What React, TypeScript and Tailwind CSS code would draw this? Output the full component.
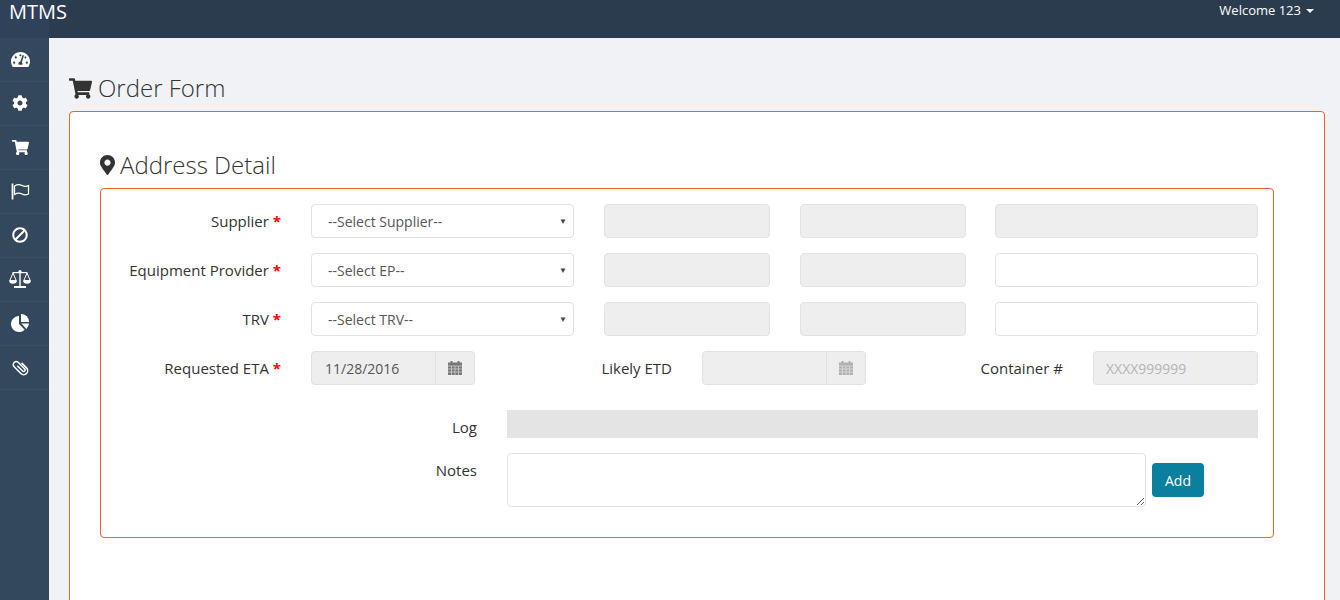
import React from 'react';
import { FaBan, FaCog, FaMapMarkerAlt, FaShoppingCart, FaTachometerAlt } from 'react-icons/fa';

function FlagIcon() {
  return (
    <svg width="19" height="17" viewBox="0 0 19 17" fill="none" stroke="currentColor">
      <path d="M1.5 0.5V16.5" strokeWidth="1.8" />
      <path
        d="M3.5 3C6 1.5 9 1.5 11 2.5C13 3.5 15.5 3.5 17.5 2.5V11C15.5 12 13 12 11 11C9 10 6 10 3.5 11.5Z"
        strokeWidth="1.3"
      />
    </svg>
  );
}

function ScaleIcon() {
  return (
    <svg width="22" height="20" viewBox="0 0 22 20" fill="currentColor">
      <circle cx="11" cy="2.5" r="1.6" />
      <rect x="10.3" y="2" width="1.4" height="15" />
      <rect x="3.5" y="3" width="15" height="1.2" />
      <rect x="5" y="17" width="12" height="2" />
      <path d="M4 4L0.8 11.5H7.2Z" fill="none" stroke="currentColor" strokeWidth="1" />
      <path d="M18 4L14.8 11.5H21.2Z" fill="none" stroke="currentColor" strokeWidth="1" />
      <path d="M0 11.5H8C8 13.5 6.2 14.8 4 14.8C1.8 14.8 0 13.5 0 11.5Z" />
      <path d="M14 11.5H22C22 13.5 20.2 14.8 18 14.8C15.8 14.8 14 13.5 14 11.5Z" />
    </svg>
  );
}

function PieIcon() {
  return (
    <svg width="18" height="18" viewBox="0 0 18 18" fill="currentColor">
      <path d="M8 2A8 8 0 1 0 13.66 15.66L8 10Z" />
      <path d="M10 0A8 8 0 0 1 18 8H10Z" />
      <path d="M10.4 9.6H18A8 8 0 0 1 15.4 15Z" />
    </svg>
  );
}

function ClipIcon() {
  return (
    <svg width="19" height="19" viewBox="-1 -1 19 19" fill="none" stroke="currentColor" strokeWidth="1.5">
      <g transform="rotate(-45 8.5 8.5)">
        <path d="M7.5 5V12.5A1.5 1.5 0 0 0 10.5 12.5V3.5A3 3 0 0 0 4.5 3.5V13A4 4 0 0 0 12.5 13V6" />
      </g>
    </svg>
  );
}

function CalendarIcon({ className }: { className: string }) {
  return (
    <svg width="14" height="14" viewBox="0 0 14 14" className={className} fill="currentColor">
      <rect x="2.5" y="0" width="2" height="3" />
      <rect x="9.5" y="0" width="2" height="3" />
      <rect x="0" y="1.5" width="14" height="12.5" />
      <path d="M0 5H14M0 8H14M0 11H14M3.5 5V14M7 5V14M10.5 5V14" stroke="#eeeeee" strokeWidth="0.8" opacity="0.75" />
    </svg>
  );
}

const navIcons = [
  <FaTachometerAlt size={19} />,
  <FaCog size={16} />,
  <FaShoppingCart size={17} />,
  <FlagIcon />,
  <FaBan size={16} className="-scale-x-100" />,
  <ScaleIcon />,
  <PieIcon />,
  <ClipIcon />,
];

const inputBase = 'h-[34px] rounded-[4px] border border-[#e2e2e2]';
const readOnlyInput = `${inputBase} bg-[#eeeeee]`;
const labelText = 'text-[15px] leading-[20px] text-[#333333] text-right';

function Required({ label }: { label: string }) {
  return (
    <div className={`${labelText} w-[180px] shrink-0`}>
      {label} <span className="font-bold text-[#ff0000]">*</span>
    </div>
  );
}

function SelectBox({ text }: { text: string }) {
  return (
    <div className={`${inputBase} ml-[30px] w-[263px] bg-white flex items-center justify-between pl-4 pr-[6px] text-[14px] text-[#555555]`}>
      <span>{text}</span>
      <span className="text-[8px] text-[#444444]">▼</span>
    </div>
  );
}

function FormRow({ label, text, third }: { label: string; text: string; third: boolean }) {
  return (
    <div className="flex items-center">
      <Required label={label} />
      <SelectBox text={text} />
      <div className={`${readOnlyInput} ml-[30px] w-[166px]`} />
      <div className={`${readOnlyInput} ml-[30px] w-[166px]`} />
      <div className={`${inputBase} ml-[29px] w-[263px] ${third ? 'bg-[#eeeeee]' : 'bg-white'}`} />
    </div>
  );
}

function DateBox({ value, muted }: { value: string; muted?: boolean }) {
  return (
    <div className={`${readOnlyInput} w-[164px] flex items-stretch overflow-hidden`}>
      <div className="flex-1 flex items-center pl-[13px] text-[14px] text-[#555555]">{value}</div>
      <div className="w-[39px] border-l border-[#e2e2e2] flex items-center justify-center">
        <CalendarIcon className={muted ? 'text-[#b0b0b0]' : 'text-[#777777]'} />
      </div>
    </div>
  );
}

export default function App() {
  return (
    <div className="h-screen overflow-hidden bg-[#f0f2f6] font-['Open_Sans',sans-serif]">
      <header className="h-[38px] bg-[linear-gradient(to_right,#2f4259_49px,#2b3c4f_49px)] flex justify-between text-white">
        <span className="block pl-[9px] text-[20px] leading-[24px] whitespace-nowrap">MTMS</span>
        <div className="flex items-start pr-[26px] pt-[1px] text-[13px] leading-[18px]">
          Welcome 123
          <span className="ml-[5px] mt-[8px] border-x-[4px] border-t-[4px] border-x-transparent border-t-white" />
        </div>
      </header>

      <div className="flex h-[562px]">
        <aside className="w-[49px] shrink-0 bg-[#33475d]">
          {navIcons.map((icon, i) => (
            <div key={i} className="h-[44px] flex items-center justify-center border-b border-[#3b4f67] pr-[9px] pb-[1px] text-white">
              {icon}
            </div>
          ))}
        </aside>

        <main className="flex-1 min-w-0 pl-[20px] pr-[15px]">
          <h1 className="mt-[31px] mb-[4px] h-[38px] flex items-center text-[24px] font-light text-[#333333] leading-[30px]">
            <FaShoppingCart size={23} className="mr-[6px] text-[#333333]" />
            Order Form
          </h1>

          <section className="h-[600px] rounded-[4px] border border-[#e8652c] bg-white pl-[30px] pr-[50px]">
            <h2 className="mt-[33px] mb-[3px] h-[40px] flex items-center text-[24px] font-light text-[#333333] leading-[30px]">
              <FaMapMarkerAlt size={20} className="mr-[5px] w-[15px] text-[#333333]" />
              Address Detail
            </h2>

            <div className="h-[350px] rounded-[4px] border border-[#e8652c] pt-[15px]">
              <div className="flex flex-col gap-[15px]">
                <FormRow label="Supplier" text="--Select Supplier--" third />
                <FormRow label="Equipment Provider" text="--Select EP--" third={false} />
                <FormRow label="TRV" text="--Select TRV--" third={false} />

                <div className="flex items-center">
                  <Required label="Requested ETA" />
                  <div className="ml-[30px]">
                    <DateBox value="11/28/2016" />
                  </div>
                  <div className={`${labelText} w-[197px] shrink-0`}>Likely ETD</div>
                  <div className="ml-[30px]">
                    <DateBox value="" muted />
                  </div>
                  <div className={`${labelText} w-[197px] shrink-0`}>Container #</div>
                  <div className={`${readOnlyInput} ml-[30px] w-[165px] flex items-center pl-[12px] text-[14px] text-[#b5b5b5]`}>
                    XXXX999999
                  </div>
                </div>
              </div>

              <div className="mt-[25px] flex">
                <div className={`${labelText} w-[376px] shrink-0 pt-[7px]`}>Log</div>
                <div className="ml-[30px] w-[751px] h-[28px] bg-[#e4e4e4]" />
              </div>

              <div className="mt-[15px] flex">
                <div className={`${labelText} w-[376px] shrink-0 pt-[7px]`}>Notes</div>
                <textarea className="ml-[30px] w-[639px] h-[54px] rounded-[4px] border border-[#e2e2e2] bg-white outline-none" />
                <button className="ml-[6px] mt-[10px] w-[52px] h-[34px] rounded-[4px] bg-[#0a7f9e] text-[14px] text-white">
                  Add
                </button>
              </div>
            </div>
          </section>
        </main>
      </div>
    </div>
  );
}
